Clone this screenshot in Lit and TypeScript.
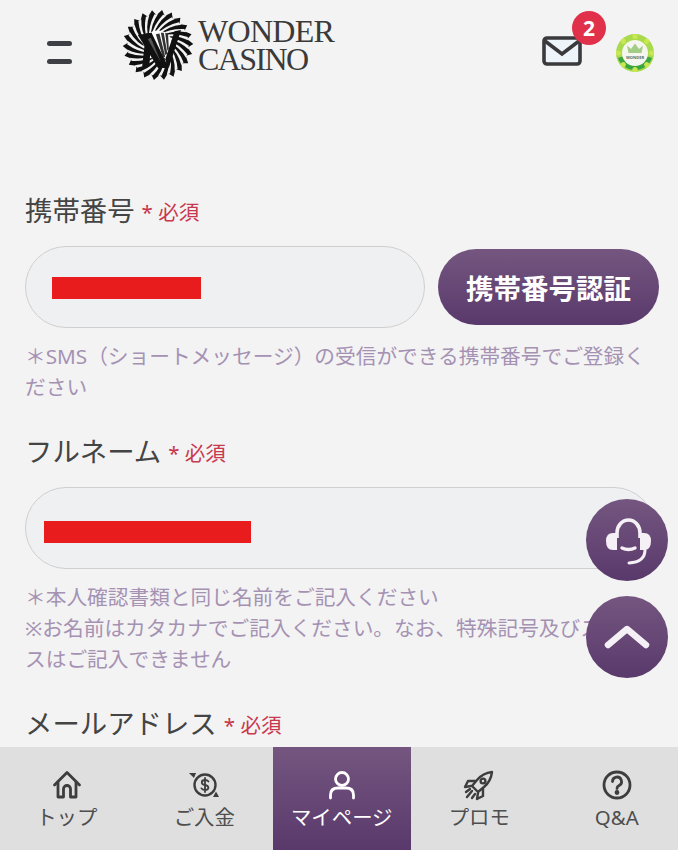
import { LitElement, html, css, svg } from "lit";
import { customElement } from "lit/decorators.js";

const CX = 50;
const CY = 50;
const spokes = Array.from({ length: 22 }, (_, i) => (i * Math.PI * 2) / 22);

function pt(r: number, a: number) {
  return `${(CX + r * Math.cos(a)).toFixed(2)} ${(CY + r * Math.sin(a)).toFixed(2)}`;
}

@customElement("app-root")
export class AppRoot extends LitElement {
  static styles = css`
    :host {
      display: block;
      position: relative;
      width: 678px;
      height: 850px;
      overflow: hidden;
      background: #f3f3f3;
      color: #444;
      font-family: "Noto Sans", "Noto Sans CJK JP", sans-serif;
    }
    .header {
      display: flex;
      align-items: center;
      height: 90px;
      padding: 0 23px 0 47px;
      box-sizing: border-box;
    }
    .burger {
      display: flex;
      flex-direction: column;
      gap: 13px;
      width: 25px;
      margin-right: 49px;
      margin-top: 14px;
    }
    .burger span {
      display: block;
      height: 5px;
      border-radius: 3px;
      background: #3d3f44;
    }
    .logo {
      display: flex;
      align-items: center;
      gap: 4px;
      margin-left: 1px;
    }
    .logo svg {
      display: block;
      width: 72px;
      height: 72px;
    }
    .logo-text {
      font-family: "Liberation Serif", serif;
      font-size: 32px;
      color: #3a3a3a;
    }
    .logo-text div {
      height: 28px;
      line-height: 28px;
      letter-spacing: -0.7px;
    }
    .logo-text .second {
      letter-spacing: -1.6px;
    }
    .spacer {
      flex: 1;
    }
    .mail {
      position: relative;
      width: 40px;
      height: 30px;
      margin-right: 33px;
      margin-top: 12px;
    }
    .mail svg {
      display: block;
    }
    .badge {
      position: absolute;
      left: 30px;
      top: -25px;
      width: 34px;
      height: 34px;
      border-radius: 50%;
      background: #e0304a;
      color: #fff;
      font-size: 21px;
      font-weight: 700;
      display: flex;
      align-items: center;
      justify-content: center;
    }
    .chip {
      display: block;
      margin-top: 16px;
    }
    .chip text {
      font-family: "Noto Sans", sans-serif;
      font-size: 4px;
      font-weight: 700;
      fill: #5c6f58;
    }
    .content {
      padding: 100px 23px 0 25px;
    }
    .label {
      display: flex;
      align-items: center;
      height: 40px;
      box-sizing: border-box;
      padding-bottom: 3px;
      font-size: 27.4px;
      margin-bottom: 16px;
      white-space: nowrap;
    }
    .label small {
      font-size: 20.5px;
      color: #c8384e;
      margin-left: 7px;
      margin-top: 5px;
    }
    .row {
      display: flex;
      align-items: center;
      gap: 13px;
      margin-right: -4px;
    }
    .input {
      flex: 1;
      height: 82px;
      box-sizing: border-box;
      border: 1px solid #cfcfcf;
      border-radius: 41px;
      background: #eff0f2;
      display: flex;
      align-items: center;
      padding-left: 26px;
    }
    .input.full {
      padding-left: 18px;
    }
    .redact {
      height: 22px;
      width: 149px;
      background: #e81c1c;
      margin-top: 2px;
    }
    .input.full .redact {
      width: 207px;
      margin-top: 7px;
    }
    .verify {
      width: 221px;
      height: 76px;
      border: 0;
      padding: 0;
      border-radius: 38px;
      background: linear-gradient(#745680, #59396b);
      color: #fff;
      font-family: inherit;
      font-size: 27.5px;
      font-weight: 700;
    }
    .hint {
      margin-top: 13px;
      margin-bottom: 28px;
      font-size: 20.7px;
      line-height: 31px;
      color: #a592b3;
    }
    .footer {
      position: absolute;
      left: -2px;
      bottom: 0;
      display: grid;
      grid-template-columns: repeat(5, 137.5px);
      height: 103px;
      background: #dfdfdf;
    }
    .tab {
      display: flex;
      flex-direction: column;
      align-items: center;
      padding-top: 22px;
      box-sizing: border-box;
      font-size: 20.4px;
      line-height: 30px;
      color: #4e4e4e;
    }
    .tab svg {
      display: block;
      width: 32px;
      height: 32px;
      margin-bottom: 1px;
      fill: none;
      stroke: #3d3d3d;
      stroke-width: 2.4;
      stroke-linecap: round;
      stroke-linejoin: round;
    }
    .tab.on {
      background: linear-gradient(#745680, #59396b);
      color: #fff;
    }
    .tab.on svg {
      stroke: #fff;
    }
    .fab {
      position: absolute;
      right: 10px;
      width: 82px;
      height: 82px;
      border-radius: 50%;
      background: linear-gradient(#745680, #59396b);
      display: flex;
      align-items: center;
      justify-content: center;
    }
    .fab.help {
      top: 499px;
    }
    .fab.up {
      top: 596px;
    }
  `;

  private logoMark() {
    return html`<svg viewBox="0 0 100 100" aria-label="Wonder Casino">
      ${spokes.map((a) => {
        const o = a + 0.8;
        const w = 0.085;
        return svg`<path d="M${pt(15, a)} Q${pt(30, a + 0.45 - w)} ${pt(43, o - w)} L${pt(42, o - w - 0.04)} L${pt(49, o + 0.03)} L${pt(42, o + w + 0.05)} L${pt(43, o + w)} Q${pt(30, a + 0.45 + w)} ${pt(15, a)} Z" fill="#111"/>`;
      })}
      <circle cx="50" cy="50" r="20" fill="#fff"/>
      <path d="M47 35 L52 34 L60 66 L57 68 Z M54 33 L58 33 L63 62 L60 64 Z M60 33 L64 34 L65 56 L63 58 Z" fill="#333"/>
      <path d="M22 36 L41 33 L65 82 L50 82 Z" fill="#111"/>
      <path d="M73 31 L82 29 L65 82 L60 70 Z" fill="#111"/>
      <path d="M33 34 L41 33 L38 80 L28 80 Z" fill="#111"/>
      <path d="M36 42 L40 40 L54 74 Z" fill="#555"/>
    </svg>`;
  }

  render() {
    return html`
      <div class="header">
        <div class="burger"><span></span><span></span></div>
        <div class="logo">
          ${this.logoMark()}
          <div class="logo-text">
            <div>WONDER</div>
            <div class="second">CASINO</div>
          </div>
        </div>
        <div class="spacer"></div>
        <div class="mail">
          <svg width="40" height="30" viewBox="0 0 40 30">
            <rect x="2" y="2" width="36" height="26" rx="3" fill="#edf4fa" stroke="#3a3a3c" stroke-width="3.6"/>
            <path d="M3 5 L20 18 L37 5" fill="none" stroke="#3a3a3c" stroke-width="3.6"/>
          </svg>
          <span class="badge">2</span>
        </div>
        <svg class="chip" width="40" height="40" viewBox="0 0 40 40">
          <circle cx="20" cy="20" r="19" fill="#a9d94c"/>
          <path d="M3 25 A18 18 0 0 0 37 25 L31 23 A11.5 11.5 0 0 1 9 23 Z" fill="#3ba540"/>
          ${[0, 45, 90, 135, 180, 225, 270, 315].map(
            (d) => svg`<circle cx="20" cy="3.5" r="2.6" fill="#c9e84f" transform="rotate(${d} 20 20)"/>`,
          )}
          <circle cx="20" cy="20" r="13" fill="#f4f6ef"/>
          <path d="M13.5 20 L12 12.5 L16 16 L20 10.5 L24 16 L28 12.5 L26.5 20 Z" fill="#a3cc86"/>
          <text x="20" y="26" text-anchor="middle">WONDER</text>
        </svg>
      </div>

      <div class="content">
        <div class="label">携帯番号<small>* 必須</small></div>
        <div class="row">
          <div class="input"><div class="redact"></div></div>
          <button class="verify">携帯番号認証</button>
        </div>
        <div class="hint">＊SMS（ショートメッセージ）の受信ができる携帯番号でご登録ください</div>

        <div class="label">フルネーム<small>* 必須</small></div>
        <div class="input full"><div class="redact"></div></div>
        <div class="hint">
          ＊本人確認書類と同じ名前をご記入ください<br />※お名前はカタカナでご記入ください。なお、特殊記号及びスペースはご記入できません
        </div>

        <div class="label">メールアドレス<small>* 必須</small></div>
      </div>

      <div class="fab help">
        <svg width="50" height="56" viewBox="0 0 50 56" fill="none">
          <path d="M15 26 V21 a11.5 13 0 0 1 23 0 V26" stroke="#f5f0f5" stroke-width="3.6"/>
          <path d="M15 21 H11 Q4 21 4 29 Q4 38 11 38 H15 Z" fill="#f5f0f5"/>
          <path d="M38 21 H42 Q49 21 49 29 Q49 38 42 38 H38 Z" fill="#f5f0f5"/>
          <path d="M43 38 Q43 50 27 51" stroke="#f5f0f5" stroke-width="3" stroke-linecap="round"/>
          <path d="M20 36 Q26.5 39 33 36" stroke="#f5f0f5" stroke-width="3.4" stroke-linecap="round"/>
        </svg>
      </div>
      <div class="fab up">
        <svg width="50" height="30" viewBox="0 0 50 30" fill="none">
          <path d="M6 23 L25 7 L44 23" stroke="#f5f0f5" stroke-width="6.5" stroke-linecap="round" stroke-linejoin="round"/>
        </svg>
      </div>

      <div class="footer">
        <div class="tab">
          <svg viewBox="0 0 32 32">
            <path d="M3.5 16 L16 3.5 L28.5 16" stroke-width="2.8"/>
            <path d="M7 13 V28 H12.5 V20 a3.5 3.5 0 0 1 7 0 V28 H25 V13" stroke-width="2.8"/>
          </svg>
          トップ
        </div>
        <div class="tab">
          <svg viewBox="0 0 32 32">
            <circle cx="17" cy="16" r="10.5"/>
            <path d="M20.5 12.5 Q19.5 11 17 11 Q13.8 11 13.8 13.4 Q13.8 15.4 17 16 Q20.4 16.7 20.4 18.8 Q20.4 21 17 21 Q14.3 21 13.4 19.4 M17 9 V23" stroke-width="1.8"/>
            <path d="M1 4 L8 4 L6 9 Z" fill="#3d3d3d" stroke="none"/>
            <path d="M31 28 L25 28 L28 22.5 Z" fill="#3d3d3d" stroke="none"/>
          </svg>
          ご入金
        </div>
        <div class="tab on">
          <svg viewBox="0 0 32 32">
            <circle cx="16" cy="10" r="6.5" stroke-width="2.8"/>
            <path d="M4.5 29 V26 Q4.5 19 12 19 H20 Q27.5 19 27.5 26 V29" stroke-width="2.8"/>
          </svg>
          マイページ
        </div>
        <div class="tab">
          <svg viewBox="0 0 32 32">
            <path d="M29 3 Q20 4 14 11 L9 17 L15 23 L21 18 Q28 12 29 3 Z" />
            <circle cx="20" cy="12" r="2.4"/>
            <path d="M12 12 L5 12 L2 18 L8 17 M20 20 L20 27 L14 30 L15 24"/>
            <path d="M9 22 L4 28 M7 20 L3 23 M12 25 L9 29"/>
          </svg>
          プロモ
        </div>
        <div class="tab">
          <svg viewBox="0 0 32 32">
            <circle cx="16" cy="16" r="13" stroke-width="2.8"/>
            <path d="M11.5 12.5 a4.5 4.5 0 1 1 6.6 4 Q16 17.6 16 19.5" stroke-width="2.8"/>
            <circle cx="16" cy="23.5" r="1.2" fill="#3d3d3d"/>
          </svg>
          Q&amp;A
        </div>
      </div>
    `;
  }
}
